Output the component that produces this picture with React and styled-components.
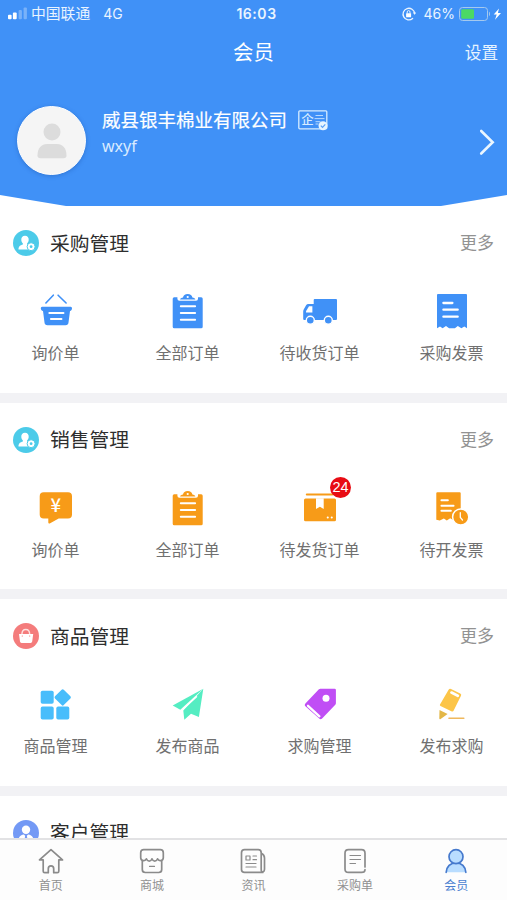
import React from "react";
import styled, { createGlobalStyle } from "styled-components";

const BLUE = "#4091f7";
const ORANGE = "#f79b18";

const GlobalStyle = createGlobalStyle`
  * { box-sizing: border-box; }
  html, body { margin: 0; padding: 0; background: #fff; overflow: hidden; }
  body { font-family: "Noto Sans CJK SC", "Noto Sans", sans-serif; }
  svg { display: block; overflow: visible; flex: none; }
`;

const Screen = styled.div`
  width: 507px;
  height: 900px;
  display: flex;
  flex-direction: column;
  background: #f2f2f5;
  overflow: hidden;
`;

const HeaderWrap = styled.header`
  flex: none;
  height: 206px;
  background: #fff;
`;

const HeaderShape = styled.div`
  height: 206px;
  background: ${BLUE};
  color: #fff;
  clip-path: polygon(0 0, 507px 0, 507px 195px, 441px 206px, 66px 206px, 0 195px);
`;

const StatusBar = styled.div`
  height: 28px;
  padding: 0 5px 0 8px;
  display: grid;
  grid-template-columns: 1fr auto 1fr;
  align-items: center;
  color: #e9f4ff;
  font-size: 14.8px;
  line-height: 28px;
`;

const StatusGroup = styled.div`
  display: flex;
  align-items: center;
  justify-content: ${(p) => (p.$end ? "flex-end" : "flex-start")};
`;

const Carrier = styled.span`
  margin-left: 4px;
  line-height: 20px;
  padding-bottom: 2px;
`;

const Latin = styled.span`
  font-family: Inter, "Liberation Sans", sans-serif;
  font-size: 14px;
  margin-left: ${(p) => p.$gap || 0}px;
  margin-right: ${(p) => p.$after || 0}px;
`;

const Clock = styled.span`
  font-family: Inter, "Liberation Sans", sans-serif;
  font-weight: 600;
  font-size: 14px;
  letter-spacing: 0.55px;
  padding-left: 3px;
`;

const TitleBar = styled.div`
  height: 46px;
  padding: 0 9px;
  display: grid;
  grid-template-columns: 1fr auto 1fr;
  align-items: center;
`;

const PageTitle = styled.h1`
  margin: 0;
  grid-column: 2;
  font-size: 20.4px;
  font-weight: 400;
  line-height: 30px;
`;

const Settings = styled.span`
  justify-self: end;
  font-size: 16.6px;
  line-height: 24px;
  padding-top: 1px;
  color: #e6f3ff;
`;

const Profile = styled.div`
  height: 132px;
  padding: 32px 12px 0 17px;
  display: flex;
  align-items: flex-start;
`;

const Avatar = styled.div`
  width: 69px;
  height: 69px;
  border-radius: 50%;
  background: #f5f5f5;
  border: 1px solid #fff;
  display: flex;
  align-items: center;
  justify-content: center;
  box-shadow: 0 1px 4px rgba(20, 70, 150, 0.35);
`;

const Identity = styled.div`
  flex: 1;
  padding-left: 16px;
`;

const NameRow = styled.div`
  display: flex;
  align-items: center;
  gap: 10.5px;
  height: 28px;
`;

const Company = styled.span`
  font-size: 18.5px;
  line-height: 26px;
  padding-bottom: 2px;
  -webkit-text-stroke: 0.2px #fff;
`;

const Account = styled.div`
  font-family: "Noto Sans", sans-serif;
  font-size: 16px;
  line-height: 20px;
  margin-top: 2px;
  color: #d9ebff;
`;

const ArrowSlot = styled.div`
  padding-top: 23px;
`;

const Section = styled.section`
  flex: none;
  height: 186.6px;
  margin-bottom: 10px;
  padding-top: 24px;
  background: #fff;
`;

const SectionHead = styled.div`
  height: 26px;
  padding: 0 13px;
  display: flex;
  align-items: center;
`;

const SectionTitle = styled.h2`
  margin: 0 0 0 11px;
  flex: 1;
  font-size: 19.8px;
  font-weight: 400;
  line-height: 26px;
  padding-bottom: 1px;
  color: #2e2e2e;
`;

const More = styled.span`
  font-size: 17px;
  line-height: 26px;
  padding-bottom: 2px;
  color: #929292;
`;

const Items = styled.div`
  display: grid;
  grid-template-columns: repeat(4, 132px);
  margin: 37px -10.5px 0;
`;

const Item = styled.div`
  display: flex;
  flex-direction: column;
  align-items: center;
`;

const IconBox = styled.div`
  position: relative;
  width: 36px;
  height: 36px;
`;

const Badge = styled.span`
  position: absolute;
  left: 28.6px;
  top: -13px;
  width: 21px;
  height: 21px;
  border-radius: 50%;
  background: #e80c14;
  color: #fff;
  font: 14.5px/21px "Liberation Sans", sans-serif;
  text-align: center;
`;

const ItemLabel = styled.span`
  margin-top: 11px;
  font-size: 16px;
  line-height: 24px;
  color: #707070;
`;

const TabBar = styled.nav`
  flex: none;
  height: 62px;
  border-top: 2px solid #e2e2e4;
  background: #fdfdfd;
  display: grid;
  grid-template-columns: repeat(5, 1fr);
`;

const Body = styled.main`
  flex: 1;
  min-height: 0;
  overflow: hidden;
  display: flex;
  flex-direction: column;
`;

const Tab = styled.div`
  padding-top: 7px;
  display: flex;
  flex-direction: column;
  align-items: center;
  color: ${(p) => (p.$active ? "#4a7fd0" : "#909090")};
`;

const TabLabel = styled.span`
  margin-top: 1.5px;
  font-size: 12px;
  line-height: 16px;
`;

const Icon = ({ children }) => (
  <svg width="36" height="36" viewBox="0.5 0 36 36" fill="none" strokeLinecap="round" strokeLinejoin="round">
    {children}
  </svg>
);

const Basket = () => (
  <Icon>
    <path d="M15.800 2.200 8.400 10M20.600 2.200l8 7.800" stroke={BLUE} strokeWidth="1.600" />
    <path d="M4.600 13.700h28.600a1.400 1.400 0 0 1 1.300 1.500c0 1.400-.7 2.600-2 2.800l-1.500 11.600a3 3 0 0 1-3 2.700H10a3 3 0 0 1-3-2.700L5.500 18c-1.400-.3-2.200-1.400-2.200-2.800a1.400 1.400 0 0 1 1.300-1.500z" fill={BLUE} />
    <path d="M11.800 20h14.200M13.400 26h10.600" stroke="#fff" strokeWidth="1.900" />
  </Icon>
);

const Clipboard = ({ color }) => (
  <Icon>
    <path d="M4.700 4.300h3.200v1.500a2 2 0 0 0 2 2h16.600a2 2 0 0 0 2-2V4.300h3.200a1.500 1.500 0 0 1 1.500 1.500v28a1.500 1.500 0 0 1-1.500 1.500h-27a1.500 1.500 0 0 1-1.500-1.500v-28a1.500 1.500 0 0 1 1.500-1.500z" fill={color} />
    <path d="M10.600 6.500c0-1.300 1.400-1.900 2.900-2.100.4-2 2-3.400 4.700-3.400s4.300 1.400 4.700 3.400c1.500.2 2.900.8 2.900 2.100z" fill={color} />
    <circle cx="18.200" cy="4" r="1.100" fill="#fff" />
    <path d="M11.300 13.300h14.300M11.300 20h14.300M11.300 26.700h14.300" stroke="#fff" strokeWidth="2" />
  </Icon>
);

const Truck = () => (
  <Icon>
    <path d="M13.200 6h21.300a1 1 0 0 1 1 1v19a1 1 0 0 1-1 1H2.700a1 1 0 0 1-1-1v-7.600c0-.7.2-1.300.5-1.900l2.400-4.200A2.600 2.600 0 0 1 6.900 11h5.300V7a1 1 0 0 1 1-1z" fill={BLUE} />
    <path d="M7.500 13.300h3.400v6.200H4.500v-1.200z" fill="#fff" />
    {[8.8, 26.8].map((x) => (
      <circle key={x} cx={x} cy="27.300" r="4" fill={BLUE} stroke="#fff" strokeWidth="1.400" />
    ))}
  </Icon>
);

const Invoice = () => (
  <Icon>
    <path d="M4.500 1h28a1 1 0 0 1 1 1v33.300l-2.700-1.700-2.900 1.700-3.600-2.200-2.900 2.200h-5.800l-3.100-2.200-3.400 2.200-2.600-1.700-3 1.700V2a1 1 0 0 1 1-1z" fill={BLUE} />
    <path d="M9.900 10h9M9.900 16.700h14.300M9.900 23.700h14.300" stroke="#fff" strokeWidth="2.300" />
  </Icon>
);

const YenText = styled.text`
  font: 500 18.5px "Noto Sans CJK SC", sans-serif;
`;

const Bubble = () => (
  <Icon>
    <path d="M6.200 2.300h24.300a4 4 0 0 1 4 4v18.300a4 4 0 0 1-4 4h-9.300l-9 4.800c-.8.4-1.400 0-1.400-.8v-4H6.200a4 4 0 0 1-4-4V6.300a4 4 0 0 1 4-4z" fill={ORANGE} />
    <YenText x="18.300" y="22.400" textAnchor="middle" fill="#fff">¥</YenText>
  </Icon>
);

const Package = () => (
  <Icon>
    <path d="M5.300 4.500h25.500" stroke={ORANGE} strokeWidth="2" />
    <rect x="2.500" y="8.600" width="32" height="22.700" rx="1.500" fill={ORANGE} />
    <path d="M14.500 8.200h7.700v10.800l-3.800-2.200-3.900 2.200z" fill="#fff" />
    <path d="M26.200 27.600h.1M30.200 27.600h.1" stroke="#fff" strokeWidth="2" />
  </Icon>
);

const PendingInvoice = () => (
  <Icon>
    <path d="M3.800 2.300h22.400a1 1 0 0 1 1 1v27.200l-7.700-.5-2.800-1.700-3.400 2.100-2.900-2-4.100 2.100-3.500-.7V3.300a1 1 0 0 1 1-1z" fill={ORANGE} />
    <path d="M7.900 10.300h6.500M7.900 15.700h12.200M7.900 20.800h9.500" stroke="#fff" strokeWidth="1.900" />
    <circle cx="27.200" cy="27" r="8.100" fill={ORANGE} stroke="#fff" strokeWidth="1.500" />
    <path d="M26.800 22.700v4.700l2.200 2.600" stroke="#fff" strokeWidth="1.300" />
  </Icon>
);

const Blocks = () => (
  <Icon>
    <g fill="#48bdfb">
      <rect x="3.200" y="4.700" width="13" height="13" rx="1.800" />
      <rect x="3.200" y="20.600" width="13" height="13" rx="1.800" />
      <rect x="18.800" y="20.600" width="13" height="13" rx="1.800" />
      <rect x="19" y="5.200" width="12.400" height="12.400" rx="1.500" transform="rotate(45 25.200 11.400)" />
    </g>
  </Icon>
);

const Plane = () => (
  <Icon>
    <g fill="#55edc2">
      <path d="M33.800 2.700 3.200 19.600l7.600 4.200z" />
      <path d="M33.800 2.700l-4.400 28.400-7.900-3.300-6.700 5.900-1-9.100z" />
    </g>
    <path d="M12.300 24.300 27 10.700" stroke="#fff" strokeWidth="1.500" />
  </Icon>
);

const Tag = () => (
  <Icon>
    <path d="M18.800 2.700h14.300a1.300 1.300 0 0 1 1.300 1.300v13.300c0 .6-.2 1.100-.6 1.500L20.600 32.500a2 2 0 0 1-2.900 0L3.900 20.300c-.8-.8-.8-2 0-2.800L17.400 3.300c.4-.4.9-.6 1.400-.6z" fill="#c04ef5" />
    <circle cx="24.500" cy="12.300" r="3.500" fill="#fff" />
    <path d="M6.500 19.800l11.400 10.500" stroke="#fff" strokeWidth="2.300" />
  </Icon>
);

const Pencil = () => (
  <Icon>
    <path d="M17.500 2.900l9.200 4.500a1.800 1.800 0 0 1 .8 2.400l-7.300 14.700a1.700 1.700 0 0 1-2.300.8L7 19.900a1 1 0 0 1-.5-1.400l8.600-14.700a1.800 1.800 0 0 1 2.400-.9z" fill="#fcc548" />
    <path d="M18 6.600l6.300 3.100" stroke="#fff" strokeWidth="2.800" />
    <path d="M6 24l8.100 4-7.300 5.200c-.5.200-1 0-1-.6z" fill="#e3b747" />
    <path d="M15.500 32.300h14.800" stroke="#efb85d" strokeWidth="1.600" />
  </Icon>
);

const HeadIcon = ({ color, kind }) => (
  <svg width="26" height="26" viewBox="0 0 26 26">
    <circle cx="13" cy="13" r="13" fill={color} />
    {kind === "bag" ? (
      <g>
        <path d="M8.900 11.500c0-3 1.300-5 3.900-5s3.900 2 3.900 5" fill="none" stroke="#ffe1df" strokeWidth="1.400" />
        <path d="M6 10.900h14.200l-1 7.700a1.600 1.600 0 0 1-1.600 1.400h-9a1.600 1.600 0 0 1-1.600-1.400z" fill="#fff" />
        <path d="M9.200 13h.2M16.600 13h.2" stroke="#f47c7c" strokeWidth="1.100" strokeLinecap="round" />
      </g>
    ) : kind === "customer" ? (
      <g fill="#fff">
        <circle cx="13" cy="9.800" r="4.200" />
        <path d="M5.500 20c.2-4 3-5.300 5.300-5.500l2.200 2 2.200-2c2.300.2 5.100 1.500 5.300 5.500z" />
        <path d="M12.200 15.500h1.600l.8 4.500h-3.200z" fill={color} />
      </g>
    ) : (
      <g>
        <path d="M12 5.700c2.500 0 3.900 1.800 3.700 4.300-.1 1.500-.8 2.600-1.600 3.500v1.100l4.400 1.900v3H5.500c0-3.200 1.700-4 4.400-4.900v-1.100c-.9-.9-1.500-2-1.600-3.500-.2-2.500 1.200-4.300 3.700-4.300z" fill="#fff" />
        <circle cx="18.100" cy="16.700" r="4" fill="#fff" stroke={color} strokeWidth="1" />
        <circle cx="18.100" cy="16.700" r="1.400" fill={color} />
      </g>
    )}
  </svg>
);

const Signal = () => (
  <svg width="19" height="14" viewBox="0 0 19 14" fill="#fff">
    <rect x="0" y="7.800" width="3.600" height="4.400" rx="1" />
    <rect x="4.900" y="5.600" width="3.800" height="6.600" rx="1" />
    <rect x="10.600" y="3" width="3.300" height="9.200" rx="1" opacity=".3" />
    <rect x="15.600" y=".6" width="3.300" height="11.600" rx="1" opacity=".3" />
  </svg>
);

const RotationLock = () => (
  <svg width="14" height="14" viewBox="0 0 14 14" fill="none" stroke="#e9f4ff" strokeLinecap="round">
    <path d="M10.600 11.500a5.800 5.800 0 1 1 2-5" strokeWidth="1.300" />
    <path d="M10.900 5.600h3.300l-1.600 2.200z" fill="#e9f4ff" stroke="none" />
    <rect x="4.100" y="6.300" width="5" height="3.900" rx=".5" fill="#fff" stroke="none" />
    <path d="M5.200 6.300V5a1.400 1.400 0 0 1 2.800 0v1.300" strokeWidth="1" />
  </svg>
);

const Battery = () => (
  <svg width="43" height="14" viewBox="0 0 43 14" fill="none">
    <rect x=".5" y=".5" width="28" height="13" rx="3" stroke="#a5c9ee" />
    <rect x="2.200" y="2.200" width="12.800" height="9.600" rx="1.300" fill="#4bd964" />
    <path d="M30 4.800c1.300.4 1.300 4 0 4.400z" fill="#a5c9ee" />
    <path d="M40 1.500l-5.300 6h3L36 12.800l6-6.700h-3.100z" fill="#fff" />
  </svg>
);

const Person = () => (
  <svg width="30" height="36" viewBox="0 0 30 36" fill="#dcdcdc">
    <circle cx="15" cy="9" r="8.500" />
    <path d="M.5 32.500C.5 25 4.500 21 10 21h10c5.500 0 9.500 4 9.500 11.500 0 1.800-1 2.800-3 2.800h-23c-2 0-3-1-3-2.800z" />
  </svg>
);

const CertText = styled.text`
  font: 500 12.5px "Noto Sans CJK SC", sans-serif;
`;

const Certificate = () => (
  <svg width="30" height="20" viewBox="0 0 30 20" fill="none">
    <rect x=".8" y=".8" width="28" height="18" rx="1" stroke="#d8edff" strokeWidth="1.300" />
    <CertText x="3.300" y="14.300" fill="#d8edff" stroke="none">企</CertText>
    <path d="M17.500 5.500h7.500M16.500 8.600h10M17.500 11.700h5M17.500 14h3" stroke="#b9daff" strokeWidth="1" />
    <circle cx="25" cy="15.700" r="4.500" fill="#e8f5ff" />
    <path d="M22.800 15.600l1.700 1.700 2.800-2.900" stroke="#5aa1f8" strokeWidth="1.200" />
  </svg>
);

const Chevron = () => (
  <svg width="16" height="26" viewBox="0 0 16 26" fill="none" stroke="#eaf6ff" strokeWidth="2.600" strokeLinecap="round">
    <path d="M2.200 2l11.500 11.300L2.200 24.500" />
  </svg>
);

const tabArt = {
  home: (
    <path d="M14 2.700 2.500 12.900h3.700v11.300c0 1 .5 1.500 1.500 1.500h3.600v-3.900c0-1.800 1-2.900 2.700-2.900s2.700 1.100 2.700 2.900v3.900h3.600c1 0 1.500-.5 1.500-1.500V12.900h3.700z" />
  ),
  shop: (
    <g>
      <path d="M5.700 2.700h16.600c2 0 3 1 3 3v5.100c0 3-4.400 4.200-5.700 1-1.300 3.200-4.400 3.200-5.600 0-1.200 3.200-4.300 3.200-5.600 0-1.300 3.200-5.700 2-5.700-1V5.700c0-2 1-3 3-3z" />
      <path d="M4.300 14v8.500c0 2 1 3 3 3h13.400c2 0 3-1 3-3V14" />
      <path d="M11.500 19.400h5" strokeWidth="1.100" />
    </g>
  ),
  news: (
    <g>
      <path d="M5.500 2.700h13.700c2 0 3 1 3 3v16.500c0 2 .4 3.200 1.600 3.200H5.500c-2 0-3-1-3-3V5.700c0-2 1-3 3-3zM20.500 25.400c3.200.5 5-.8 5-3.200V11c0-2.200-1.500-3.800-3.200-4.700" />
      <path d="M7 9h4v4H7zM7 16.500h10M7 20h10M14 9h3.500M14 12.700h3.500" strokeWidth="1.200" />
    </g>
  ),
  order: (
    <g>
      <path d="M24 20V6.200c0-2.200-1.200-3.500-3.500-3.500h-13C5.200 2.700 4 4 4 6.200v15.700c0 2.300 1.200 3.500 3.500 3.500h13c2.200 0 3.500-1 3.500-2.700" />
      <path d="M9 8.500h10.500M9 12.500h10.500M9 16.500h5.500" strokeWidth="1.200" />
    </g>
  ),
  member: (
    <g>
      <path d="M4.200 25.300c.3-5.600 4.200-9.500 9.800-9.500s9.500 3.900 9.800 9.500z" fill="#b9ddff" stroke="none" />
      <path d="M4.200 25.300c.3-5.600 4.200-9.500 9.800-9.500s9.500 3.900 9.800 9.500" />
      <circle cx="14" cy="9.700" r="7" fill="#b9ddff" />
    </g>
  ),
};

const TabIcon = ({ name, active }) => (
  <svg width="28" height="28" viewBox="0 0 28 28" fill="none" stroke={active ? "#4579cd" : "#8b8b8b"} strokeWidth="1.700" strokeLinecap="round" strokeLinejoin="round">
    {tabArt[name]}
  </svg>
);

const sections = [
  {
    title: "采购管理",
    color: "#4ccbe9",
    kind: "user",
    items: [
      ["询价单", <Basket />],
      ["全部订单", <Clipboard color={BLUE} />],
      ["待收货订单", <Truck />],
      ["采购发票", <Invoice />],
    ],
  },
  {
    title: "销售管理",
    color: "#4ccbe9",
    kind: "user",
    items: [
      ["询价单", <Bubble />],
      ["全部订单", <Clipboard color={ORANGE} />],
      ["待发货订单", <Package />, 24],
      ["待开发票", <PendingInvoice />],
    ],
  },
  {
    title: "商品管理",
    color: "#f47c7c",
    kind: "bag",
    items: [
      ["商品管理", <Blocks />],
      ["发布商品", <Plane />],
      ["求购管理", <Tag />],
      ["发布求购", <Pencil />],
    ],
  },
  { title: "客户管理", color: "#7399f5", kind: "customer", items: [] },
];

const tabs = [
  ["首页", "home"],
  ["商城", "shop"],
  ["资讯", "news"],
  ["采购单", "order"],
  ["会员", "member"],
];

export default function App() {
  return (
    <Screen>
      <GlobalStyle />
      <HeaderWrap>
        <HeaderShape>
          <StatusBar>
            <StatusGroup>
              <Signal />
              <Carrier>中国联通</Carrier>
              <Latin $gap={13}>4G</Latin>
            </StatusGroup>
            <Clock>16:03</Clock>
            <StatusGroup $end>
              <RotationLock />
              <Latin $gap={8} $after={4}>46%</Latin>
              <Battery />
            </StatusGroup>
          </StatusBar>
          <TitleBar>
            <PageTitle>会员</PageTitle>
            <Settings>设置</Settings>
          </TitleBar>
          <Profile>
            <Avatar>
              <Person />
            </Avatar>
            <Identity>
              <NameRow>
                <Company>威县银丰棉业有限公司</Company>
                <Certificate />
              </NameRow>
              <Account>wxyf</Account>
            </Identity>
            <ArrowSlot>
              <Chevron />
            </ArrowSlot>
          </Profile>
        </HeaderShape>
      </HeaderWrap>
      <Body>
        {sections.map((s) => (
          <Section key={s.title}>
            <SectionHead>
              <HeadIcon color={s.color} kind={s.kind} />
              <SectionTitle>{s.title}</SectionTitle>
              {s.items.length > 0 && <More>更多</More>}
            </SectionHead>
            <Items>
              {s.items.map(([label, icon, count]) => (
                <Item key={label}>
                  <IconBox>
                    {icon}
                    {count && <Badge>{count}</Badge>}
                  </IconBox>
                  <ItemLabel>{label}</ItemLabel>
                </Item>
              ))}
            </Items>
          </Section>
        ))}
      </Body>
      <TabBar>
        {tabs.map(([label, name]) => (
          <Tab key={name} $active={name === "member"}>
            <TabIcon name={name} active={name === "member"} />
            <TabLabel>{label}</TabLabel>
          </Tab>
        ))}
      </TabBar>
    </Screen>
  );
}
